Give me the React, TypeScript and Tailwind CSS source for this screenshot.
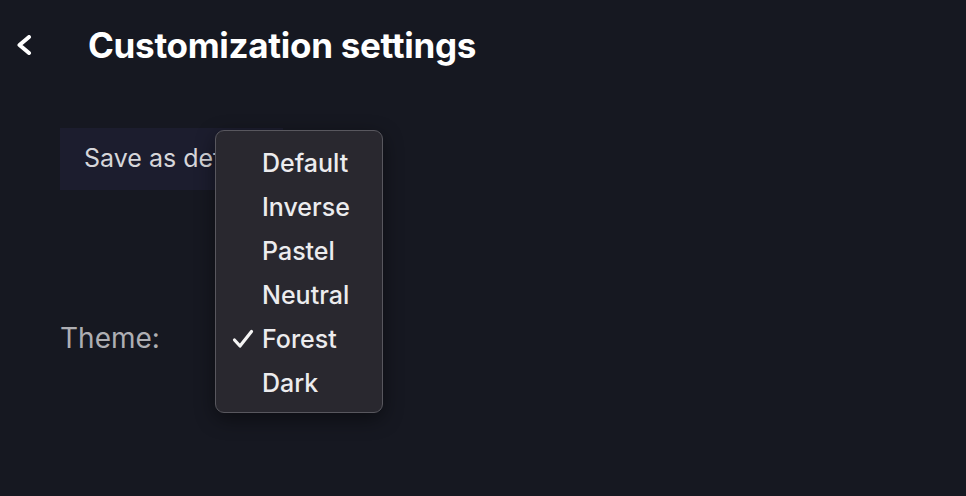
import React from "react";

const items = ["Default", "Inverse", "Pastel", "Neutral", "Forest", "Dark"];

export default function App() {
  return (
    <div
      className="relative w-[966px] h-[496px] bg-[#161821] overflow-hidden"
      style={{ fontFamily: "Inter, 'Noto Sans', sans-serif" }}
    >
      <div className="flex items-center h-[90px] pl-[16px]">
        <svg className="w-[72px] h-[20px]" viewBox="0 0 72 20">
          <path d="M13 2 L3.5 10 L13 18" fill="none" stroke="#ffffff" strokeWidth="4" strokeLinecap="round" strokeLinejoin="round" />
        </svg>
        <h1 className="text-white text-[35px] font-bold leading-none tracking-[-0.3px]">Customization settings</h1>
      </div>
      <div className="pl-[60px] pt-[38px]">
        <div className="w-[223px] h-[62px] bg-[#1c1d2e] flex items-center pl-[24px] text-[25px] text-[#d6d6da] whitespace-nowrap overflow-hidden">
          Save as default
        </div>
        <div className="mt-[128px] h-[40px] flex items-center text-[28px] text-[#aeaeb3]">
          Theme:
        </div>
      </div>
      <div className="absolute left-[215px] top-[130px] w-[168px] h-[283px] rounded-[9px] border border-[#58575e] bg-[#29282f] shadow-[0_6px_20px_rgba(0,0,0,0.45)] pt-[10px]">
        {items.map((it) => (
          <div key={it} className="relative h-[44px] flex items-center pl-[46px] text-[25px] font-medium text-[#ececee] leading-none">
            {it === "Forest" && (
              <svg className="absolute left-[16px] top-[12px]" width="22" height="20" viewBox="0 0 22 20">
                <path d="M2.5 11 L8 17 L19.5 2.5" fill="none" stroke="#f4f4f4" strokeWidth="3.2" strokeLinecap="round" strokeLinejoin="round" />
              </svg>
            )}
            {it}
          </div>
        ))}
      </div>
    </div>
  );
}
